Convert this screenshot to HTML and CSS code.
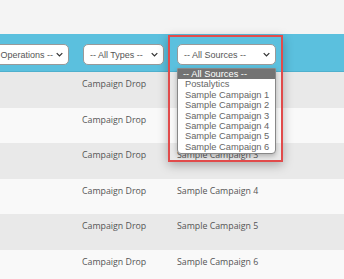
FILE: index.html
```html
<!DOCTYPE html>
<html lang="en">
<head>
  <meta charset="UTF-8">
  <title>Campaign Activity</title>
  <link rel="stylesheet" href="styles.css">
</head>
<body>
  <div class="topband"></div>

  <section class="filters">
    <div class="select sel-ops">-- All Operations --<svg class="chev" viewBox="0 0 10 6"><path d="M1 1l4 4 4-4"/></svg></div>
    <div class="select sel-types">-- All Types --<svg class="chev" viewBox="0 0 10 6"><path d="M1 1l4 4 4-4"/></svg></div>
    <div class="select sel-sources">-- All Sources --<svg class="chev" viewBox="0 0 10 6"><path d="M1 1l4 4 4-4"/></svg>
      <ul class="options">
        <li class="active">-- All Sources --</li>
        <li>Postalytics</li>
        <li>Sample Campaign 1</li>
        <li>Sample Campaign 2</li>
        <li>Sample Campaign 3</li>
        <li>Sample Campaign 4</li>
        <li>Sample Campaign 5</li>
        <li>Sample Campaign 6</li>
      </ul>
    </div>
    <div class="callout"></div>
  </section>

  <section class="rows">
    <div class="row"><span>Campaign Drop</span><span></span></div>
    <div class="row"><span>Campaign Drop</span><span></span></div>
    <div class="row"><span>Campaign Drop</span><span>Sample Campaign 3</span></div>
    <div class="row"><span>Campaign Drop</span><span>Sample Campaign 4</span></div>
    <div class="row"><span>Campaign Drop</span><span>Sample Campaign 5</span></div>
    <div class="row"><span>Campaign Drop</span><span>Sample Campaign 6</span></div>
  </section>
</body>
</html>
```

FILE: styles.css
```css
/* filter bar + activity table */
:root {
  --bar-blue: #5bc0de;
  --row-dark: #e9e9e9;
  --row-light: #f9f9f9;
  --text: #555;
  --callout: #e14b4b;
}
* { box-sizing: border-box; margin: 0; padding: 0; }
html, body { overflow: hidden; }
body {
  width: 344px;
  height: 279px;
  background: var(--row-light);
  font-family: 'Liberation Sans', Arial, sans-serif;
}
.topband {
  height: 34px;
  background: #f4f4f4;
}
.filters {
  position: relative;
  height: 38px;
  background: var(--bar-blue);
  border-bottom: 1px solid #4fb0cd;
  display: flex;
  align-items: flex-start;
  gap: 14px;
  padding-top: 10px;
  margin-left: -30px;
}
.select {
  position: relative;
  height: 21px;
  background: #fff;
  border: 1px solid #999;
  border-radius: 5px;
  display: flex;
  align-items: center;
  padding-left: 6px;
  font-size: 9px;
  color: #555;
  white-space: nowrap;
}
.sel-ops { width: 99px; padding-left: 9px; }
.sel-types { width: 81px; }
.sel-sources { width: 99px; margin-left: -1px; }
.chev {
  position: absolute;
  right: 5px;
  top: 7px;
  width: 7px;
  height: 5px;
  fill: none;
  stroke: #333;
  stroke-width: 1.8;
}
.options {
  position: absolute;
  left: -1px;
  top: 23px;
  width: 99px;
  list-style: none;
  background: #fff;
  border: 1px solid #888;
  border-radius: 0 0 4px 4px;
  padding-bottom: 1px;
  box-shadow: 0 2px 5px rgba(0,0,0,0.25);
  z-index: 2;
}
.options li {
  height: 10.4px;
  line-height: 10.4px;
  padding-left: 7px;
  font-size: 9.3px;
  color: #666;
}
.options li.active {
  background: #737373;
  color: #fff;
  padding-left: 5px;
}
.callout {
  position: absolute;
  left: 198px;
  top: 1px;
  width: 115px;
  height: 127px;
  border: 2px solid var(--callout);
  box-shadow: 0 3px 10px rgba(0,0,0,0.28);
  z-index: 3;
}
.rows {
  font-family: 'Open Sans', 'Noto Sans', sans-serif;
  font-size: 8.8px;
  color: var(--text);
}
.row {
  height: 35.5px;
  display: grid;
  grid-template-columns: 82px 95px 1fr;
  padding-top: 6px;
}
.row span:first-child { grid-column: 2; }
.row:nth-child(odd) { background: var(--row-dark); }
.row:nth-child(even) { background: var(--row-light); }
```
